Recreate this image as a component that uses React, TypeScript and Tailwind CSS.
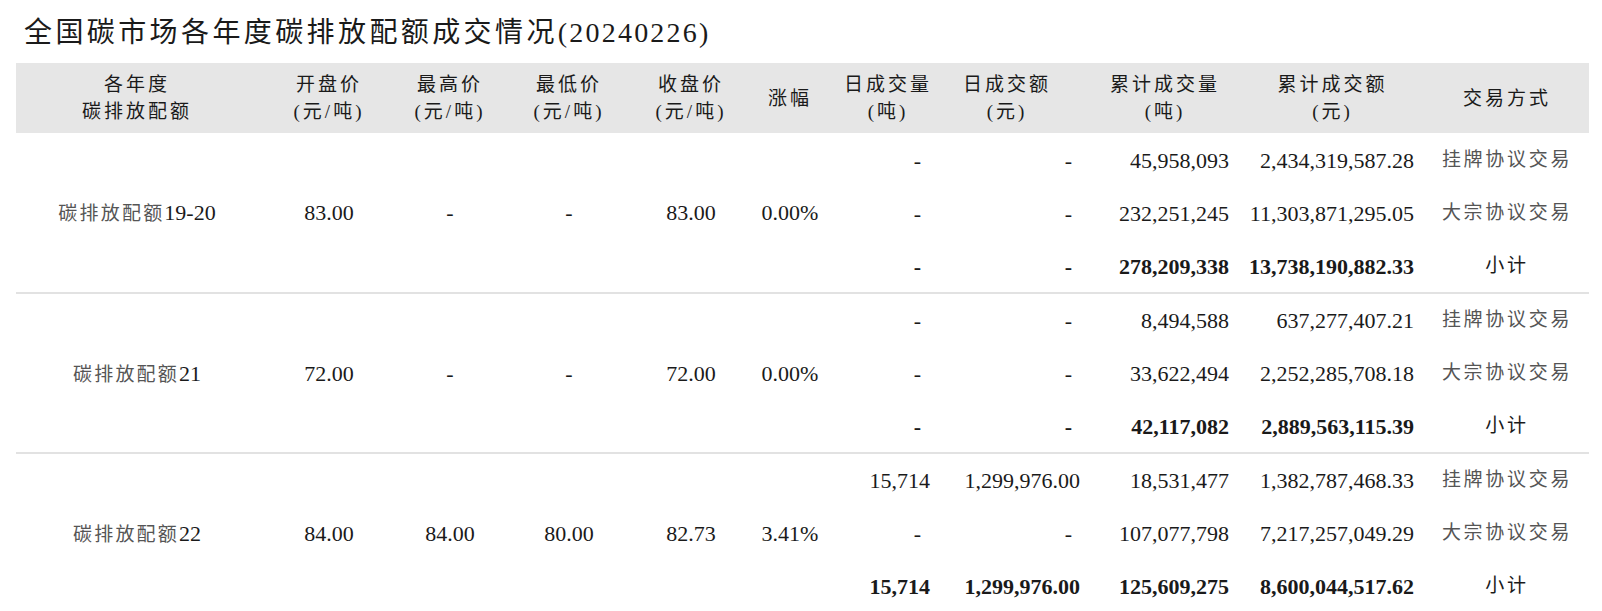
import React from 'react'

type SubRow = {
  dayVol: string
  dayAmt: string
  cumVol: string
  cumAmt: string
  type: string
  total?: boolean
}

type Group = {
  cn: string
  num: string
  open: string
  high: string
  low: string
  close: string
  change: string
  rows: SubRow[]
}

const groups: Group[] = [
  {
    cn: '碳排放配额',
    num: '19-20',
    open: '83.00',
    high: '-',
    low: '-',
    close: '83.00',
    change: '0.00%',
    rows: [
      { dayVol: '-', dayAmt: '-', cumVol: '45,958,093', cumAmt: '2,434,319,587.28', type: '挂牌协议交易' },
      { dayVol: '-', dayAmt: '-', cumVol: '232,251,245', cumAmt: '11,303,871,295.05', type: '大宗协议交易' },
      { dayVol: '-', dayAmt: '-', cumVol: '278,209,338', cumAmt: '13,738,190,882.33', type: '小计', total: true },
    ],
  },
  {
    cn: '碳排放配额',
    num: '21',
    open: '72.00',
    high: '-',
    low: '-',
    close: '72.00',
    change: '0.00%',
    rows: [
      { dayVol: '-', dayAmt: '-', cumVol: '8,494,588', cumAmt: '637,277,407.21', type: '挂牌协议交易' },
      { dayVol: '-', dayAmt: '-', cumVol: '33,622,494', cumAmt: '2,252,285,708.18', type: '大宗协议交易' },
      { dayVol: '-', dayAmt: '-', cumVol: '42,117,082', cumAmt: '2,889,563,115.39', type: '小计', total: true },
    ],
  },
  {
    cn: '碳排放配额',
    num: '22',
    open: '84.00',
    high: '84.00',
    low: '80.00',
    close: '82.73',
    change: '3.41%',
    rows: [
      { dayVol: '15,714', dayAmt: '1,299,976.00', cumVol: '18,531,477', cumAmt: '1,382,787,468.33', type: '挂牌协议交易' },
      { dayVol: '-', dayAmt: '-', cumVol: '107,077,798', cumAmt: '7,217,257,049.29', type: '大宗协议交易' },
      { dayVol: '15,714', dayAmt: '1,299,976.00', cumVol: '125,609,275', cumAmt: '8,600,044,517.62', type: '小计', total: true },
    ],
  },
]

const widths = [242, 142, 100, 138, 106, 92, 104, 150, 150, 185, 164]

function Head({ top, bottom, className = '' }: { top: string; bottom?: string; className?: string }) {
  return (
    <th className={`font-normal align-middle text-center leading-[27px] text-[19px] tracking-[3px] ${className}`}>
      <div>{top}</div>
      {bottom && <div>{bottom}</div>}
    </th>
  )
}

export default function App() {
  return (
    <div className="w-[1602px] h-[611px] overflow-hidden bg-white text-[#1a1a1a] font-[family-name:'Liberation_Serif','Noto_Sans_CJK_SC',serif]">
      <h1 className="pl-[24px] pt-[15px] pb-[8px] leading-[36px] font-normal">
        <span className="text-[28px] tracking-[3.4px]">全国碳市场各年度碳排放配额成交情况</span>
        <span className="text-[28px] tracking-[2.2px]">(20240226)</span>
      </h1>

      <table className="ml-[16px] w-[1573px] table-fixed border-collapse">
        <colgroup>
          {widths.map((w, i) => (
            <col key={i} style={{ width: w }} />
          ))}
        </colgroup>
        <thead>
          <tr className="h-[70px] bg-[#e6e6e6]">
            <Head top="各年度" bottom="碳排放配额" />
            <Head top="开盘价" bottom="(元/吨)" />
            <Head top="最高价" bottom="(元/吨)" />
            <Head top="最低价" bottom="(元/吨)" />
            <Head top="收盘价" bottom="(元/吨)" />
            <Head top="涨幅" />
            <Head top="日成交量" bottom="(吨)" />
            <Head top="日成交额" bottom="(元)" className="pr-[16px]" />
            <Head top="累计成交量" bottom="(吨)" />
            <Head top="累计成交额" bottom="(元)" />
            <Head top="交易方式" />
          </tr>
        </thead>
        {groups.map((g, gi) => (
          <tbody key={gi} className="border-b-2 border-[#e2e2e2]">
            {g.rows.map((r, ri) => (
              <tr key={ri} className={`text-[22px] ${ri === 0 ? 'h-[54px]' : 'h-[53px]'}`}>
                {ri === 0 && (
                  <>
                    <td rowSpan={3} className="text-center align-middle">
                      <span className="text-[19px] tracking-[2.2px] text-[#555]">{g.cn}</span>
                      <span>{g.num}</span>
                    </td>
                    <td rowSpan={3} className="text-center align-middle">{g.open}</td>
                    <td rowSpan={3} className="text-center align-middle">{g.high}</td>
                    <td rowSpan={3} className="text-center align-middle">{g.low}</td>
                    <td rowSpan={3} className="text-center align-middle">{g.close}</td>
                    <td rowSpan={3} className="text-center align-middle">{g.change}</td>
                  </>
                )}
                <td className={`text-right align-middle ${r.dayVol === '-' ? 'pr-[19px]' : 'pr-[10px]'} ${r.total ? 'font-bold' : ''}`}>
                  {r.dayVol}
                </td>
                <td className={`text-right align-middle ${r.dayAmt === '-' ? 'pr-[18px]' : 'pr-[10px]'} ${r.total ? 'font-bold' : ''}`}>
                  {r.dayAmt}
                </td>
                <td className={`text-right align-middle pr-[11px] ${r.total ? 'font-bold' : ''}`}>{r.cumVol}</td>
                <td className={`text-right align-middle pr-[11px] ${r.total ? 'font-bold' : ''}`}>{r.cumAmt}</td>
                <td
                  className={`text-center align-middle text-[19px] tracking-[2.7px] ${
                    r.total ? 'text-[#1a1a1a]' : 'text-[#555]'
                  }`}
                >
                  {r.type}
                </td>
              </tr>
            ))}
          </tbody>
        ))}
      </table>
    </div>
  )
}
